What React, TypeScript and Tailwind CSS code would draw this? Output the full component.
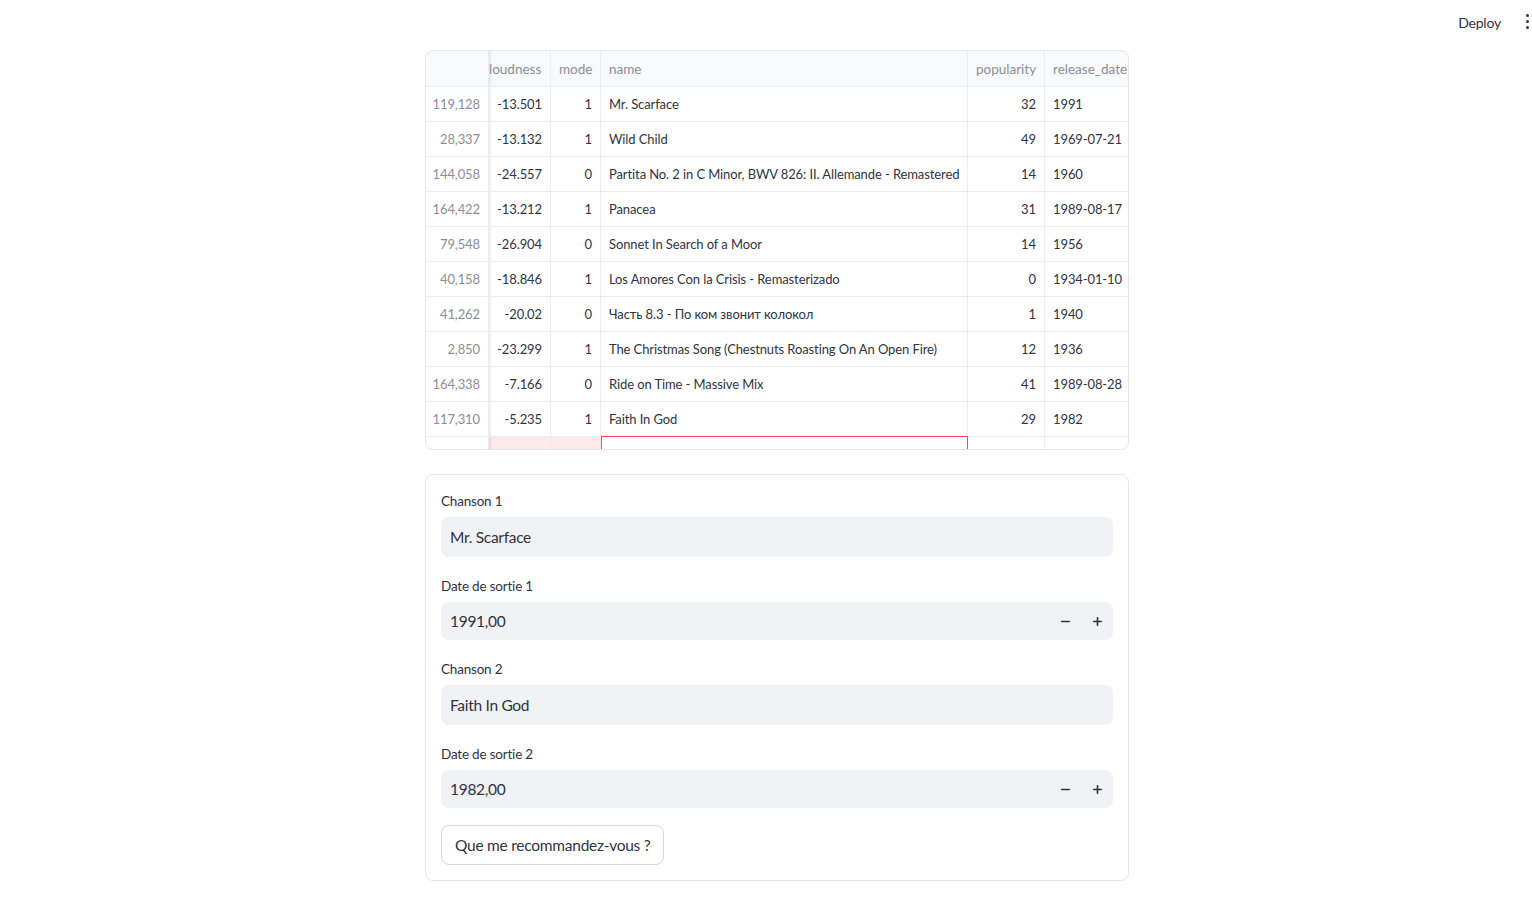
import { Minus, Plus } from 'lucide-react';

const rows = [
  { idx: '119,128', loud: '-13.501', mode: 1, name: 'Mr. Scarface', pop: 32, date: '1991' },
  { idx: '28,337', loud: '-13.132', mode: 1, name: 'Wild Child', pop: 49, date: '1969-07-21' },
  { idx: '144,058', loud: '-24.557', mode: 0, name: 'Partita No. 2 in C Minor, BWV 826: II. Allemande - Remastered', pop: 14, date: '1960' },
  { idx: '164,422', loud: '-13.212', mode: 1, name: 'Panacea', pop: 31, date: '1989-08-17' },
  { idx: '79,548', loud: '-26.904', mode: 0, name: 'Sonnet In Search of a Moor', pop: 14, date: '1956' },
  { idx: '40,158', loud: '-18.846', mode: 1, name: 'Los Amores Con la Crisis - Remasterizado', pop: 0, date: '1934-01-10' },
  { idx: '41,262', loud: '-20.02', mode: 0, name: 'Часть 8.3 - По ком звонит колокол', pop: 1, date: '1940' },
  { idx: '2,850', loud: '-23.299', mode: 1, name: 'The Christmas Song (Chestnuts Roasting On An Open Fire)', pop: 12, date: '1936' },
  { idx: '164,338', loud: '-7.166', mode: 0, name: 'Ride on Time - Massive Mix', pop: 41, date: '1989-08-28' },
  { idx: '117,310', loud: '-5.235', mode: 1, name: 'Faith In God', pop: 29, date: '1982' },
];

const font = { fontFamily: '"Source Sans Pro", Lato, "Noto Sans", sans-serif' };

function Label({ children }: { children: string }) {
  return (
    <label className="text-[13.5px] tracking-[-0.2px] text-[#31333f] h-[21px] leading-[21px] mb-[6px] pt-[1px]">
      {children}
    </label>
  );
}

function TextField({ label, value }: { label: string; value: string }) {
  return (
    <div className="flex flex-col">
      <Label>{label}</Label>
      <div className="h-[40px] rounded-[8px] bg-[#f0f2f6] flex items-center px-[9px] pt-[1px] text-[15.5px] tracking-[-0.3px] text-[#31333f]">
        {value}
      </div>
    </div>
  );
}

function NumberField({ label, value }: { label: string; value: string }) {
  return (
    <div className="flex flex-col">
      <Label>{label}</Label>
      <div className="h-[38px] rounded-[8px] bg-[#f0f2f6] flex items-center pl-[9px] text-[15.5px] tracking-[-0.3px] text-[#31333f]">
        <span className="flex-1 pt-[1px]">{value}</span>
        <span className="w-[32px] flex justify-center text-[#31333f]">
          <Minus size={13} strokeWidth={3} />
        </span>
        <span className="w-[32px] flex justify-center text-[#31333f]">
          <Plus size={13} strokeWidth={3} />
        </span>
      </div>
    </div>
  );
}

export default function App() {
  const cell =
    'h-[35px] border-b border-[#eaecf0] flex items-center px-[8px] pt-[2px] text-[13px] tracking-[-0.1px] whitespace-nowrap overflow-hidden';
  const head =
    'h-[36px] bg-[#f8f9fb] border-b border-[#eaecf0] flex items-center pt-[1px] text-[13.5px] text-[#8b8e98] whitespace-nowrap overflow-hidden';
  const frozen = 'shadow-[inset_3px_0_3px_-2px_rgba(0,0,0,0.12)]';
  return (
    <div className="min-h-[902px] bg-white relative" style={font}>
      <div className="absolute top-[12px] right-[31px] text-[14px] tracking-[-0.2px] text-[#31333f]">Deploy</div>
      <div className="absolute top-[14px] right-[2px] flex flex-col gap-[3px] items-center w-[6px]">
        <span className="w-[3px] h-[3px] rounded-full bg-[#31333f]" />
        <span className="w-[3px] h-[3px] rounded-full bg-[#31333f]" />
        <span className="w-[3px] h-[3px] rounded-full bg-[#31333f]" />
      </div>

      <div className="w-[728px] mx-auto pl-[23px] pr-[1px] pt-[50px] pb-[21px]">
        {/* data table */}
        <div className="relative border border-[#e4e6eb] rounded-[8px] overflow-hidden h-[400px]">
          <div className="grid grid-cols-[63px_62px_50px_367px_77px_83px] text-[#31333f]">
            {/* header */}
            <div className={`${head} border-r`} />
            <div className={`${head} border-r ${frozen}`}>loudness</div>
            <div className={`${head} border-r px-[8px]`}>mode</div>
            <div className={`${head} border-r px-[8px] bg-[#f0f2f6]`}>name</div>
            <div className={`${head} border-r px-[8px]`}>popularity</div>
            <div className={`${head} px-[8px]`}>release_date</div>
            {rows.map((r) => (
              <div key={r.idx} className="contents">
                <div className={`${cell} justify-end border-r text-[#8b8e98]`}>{r.idx}</div>
                <div className={`${cell} justify-end border-r ${frozen}`}>{r.loud}</div>
                <div className={`${cell} justify-end border-r`}>{r.mode}</div>
                <div className={`${cell} border-r`}>{r.name}</div>
                <div className={`${cell} justify-end border-r`}>{r.pop}</div>
                <div className={cell}>{r.date}</div>
              </div>
            ))}
            <div className="h-[14px] border-r border-[#eaecf0]" />
            <div className={`h-[14px] border-r border-[#eaecf0] bg-[#fde9ea] ${frozen}`} />
            <div className="h-[14px] border-r border-[#eaecf0] bg-[#fde9ea]" />
            <div className="h-[14px] border-t border-l border-r border-[#ff4b4b] -mt-px" />
            <div className="h-[14px] border-r border-[#eaecf0]" />
            <div className="h-[14px]" />
          </div>
        </div>

        {/* form */}
        <div className="mt-[24px] border border-[#e4e6eb] rounded-[8px] px-[15px] pt-[15px] pb-[15px] flex flex-col gap-[18px]">
          <TextField label="Chanson 1" value="Mr. Scarface" />
          <NumberField label="Date de sortie 1" value="1991,00" />
          <TextField label="Chanson 2" value="Faith In God" />
          <NumberField label="Date de sortie 2" value="1982,00" />
          <div className="-mt-[1px]">
            <button className="h-[40px] px-[13px] pt-[1px] rounded-[8px] border border-[#d5d7de] bg-white text-[15.5px] tracking-[-0.25px] text-[#31333f]">
              Que me recommandez-vous ?
            </button>
          </div>
        </div>
      </div>
    </div>
  );
}
